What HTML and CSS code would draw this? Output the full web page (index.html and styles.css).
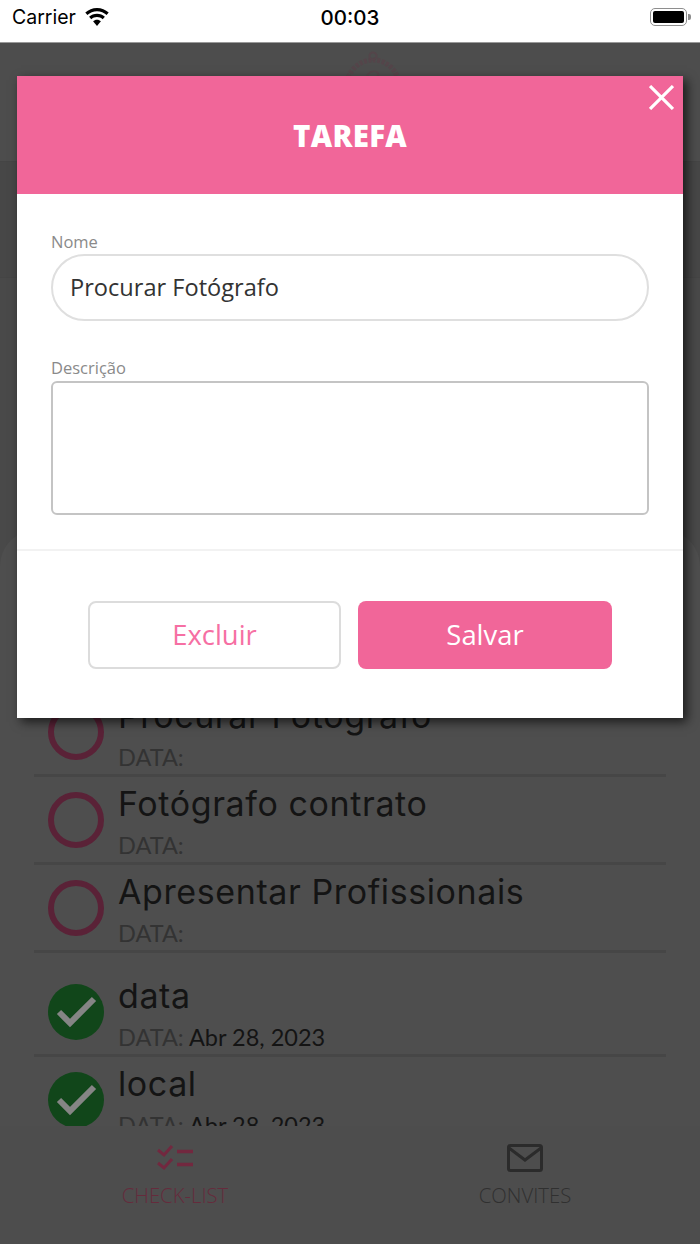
FILE: index.html
```html
<!DOCTYPE html>
<html lang="pt">
<head>
<meta charset="utf-8">
<title>Tarefa</title>
<link rel="stylesheet" href="styles.css">
</head>
<body>
<div class="status">
  <div class="status-left">
    <span class="carrier">Carrier</span>
    <svg class="wifi" viewBox="0 0 26 19"><path d="M13 3.200c3.700 0 7 1.400 9.600 3.800l2.100-2.400C21.600 1.700 17.500 0 13 0S4.400 1.700 1.300 4.600l2.100 2.400C6 4.600 9.300 3.200 13 3.200z"/><path d="M13 9c2.200 0 4.200.8 5.700 2.200l2.200-2.400C18.800 6.900 16 5.800 13 5.800S7.200 6.900 5.100 8.800l2.200 2.400C8.800 9.800 10.800 9 13 9z"/><path d="M13 11.700c-1.500 0-2.900.6-3.900 1.500L13 18l3.900-4.800c-1-.9-2.400-1.500-3.900-1.500z"/></svg>
  </div>
  <span class="clock">00:03</span>
  <div class="battery"><span class="battery-body"><span class="battery-fill"></span></span><span class="battery-tip"></span></div>
</div>

<div class="app">
  <div class="app-header">
    <svg class="crest" viewBox="0 0 60 60"><circle cx="30" cy="36" r="26" fill="none" stroke="#54454a" stroke-width="5" stroke-dasharray="3 1.500"/><circle cx="30" cy="6" r="3.500" fill="none" stroke="#54454a" stroke-width="2"/><path d="M24 26c2-5 9-6 11-3s-3 6-7 5" fill="none" stroke="#54454a" stroke-width="1.500"/></svg>
  </div>
  <div class="app-sub"></div>
  <div class="sheet">
    <div class="list">
      <div class="task">
        <span class="ring"></span>
        <div class="task-text"><div class="task-name">Procurar Fotógrafo</div><div class="task-date"><span class="date-label">DATA:</span></div></div>
      </div>
      <div class="task">
        <span class="ring"></span>
        <div class="task-text"><div class="task-name">Fotógrafo contrato</div><div class="task-date"><span class="date-label">DATA:</span></div></div>
      </div>
      <div class="task task-last">
        <span class="ring"></span>
        <div class="task-text"><div class="task-name">Apresentar Profissionais</div><div class="task-date"><span class="date-label">DATA:</span></div></div>
      </div>
      <div class="task">
        <svg class="done" viewBox="0 0 56 56"><circle cx="28" cy="28" r="28" fill="#11461a"/><path d="M11 28l11 11 24-24" fill="none" stroke="#858585" stroke-width="6"/></svg>
        <div class="task-text"><div class="task-name">data</div><div class="task-date"><span class="date-label">DATA:</span> Abr 28, 2023</div></div>
      </div>
      <div class="task">
        <svg class="done" viewBox="0 0 56 56"><circle cx="28" cy="28" r="28" fill="#11461a"/><path d="M11 28l11 11 24-24" fill="none" stroke="#858585" stroke-width="6"/></svg>
        <div class="task-text"><div class="task-name">local</div><div class="task-date"><span class="date-label">DATA:</span> Abr 28, 2023</div></div>
      </div>
    </div>
  </div>
  <div class="tabs">
    <div class="tab tab-active">
      <svg class="tab-icon" viewBox="0 0 36 28"><path d="M1 6l6 5 8-9M1 19l6 5 8-9" fill="none" stroke="#72283f" stroke-width="3"/><path d="M20 7.500h16M20 20.500h16" fill="none" stroke="#72283f" stroke-width="3.500"/></svg>
      <span>CHECK-LIST</span>
    </div>
    <div class="tab">
      <svg class="tab-icon" viewBox="0 0 36 28"><rect x="1.500" y="1.500" width="33" height="25" rx="2" fill="none" stroke="#2b2b2b" stroke-width="3"/><path d="M2 4l16 12L34 4" fill="none" stroke="#2b2b2b" stroke-width="3"/></svg>
      <span>CONVITES</span>
    </div>
  </div>
</div>

<div class="modal">
  <div class="modal-head">
    <h1>TAREFA</h1>
    <svg class="close" viewBox="0 0 24 24"><path d="M1 1l22 22M23 1L1 23" stroke="#fff" stroke-width="3" fill="none"/></svg>
  </div>
  <div class="modal-body">
    <label class="field-label name-label">Nome</label>
    <div class="name-input">Procurar Fotógrafo</div>
    <label class="field-label desc-label">Descrição</label>
    <div class="desc-input"></div>
  </div>
  <div class="modal-foot">
    <button class="btn btn-outline">Excluir</button>
    <button class="btn btn-fill">Salvar</button>
  </div>
</div>
</body>
</html>
```
FILE: styles.css
```css
* { box-sizing: border-box; }
html, body { margin: 0; padding: 0; }
body {
  width: 700px;
  height: 1244px;
  position: relative;
  overflow: hidden;
  background: #4d4d4d;
  font-family: "Open Sans", sans-serif;
}
.status {
  height: 43px;
  background: #fff;
  display: flex;
  align-items: center;
  justify-content: space-between;
  padding: 0 9px 8px 12px;
  position: relative;
  border-bottom: 1px solid #999;
  color: #000;
  font-family: Inter, "Liberation Sans", sans-serif;
}
.status-left { display: flex; align-items: center; gap: 8px; }
.carrier { font-size: 19.500px; }
.wifi { width: 26px; height: 19px; margin-top: 0; }
.clock {
  font-size: 20.500px;
  font-weight: 500;
  position: absolute;
  left: 0;
  right: 0;
  top: 5px;
  text-align: center;
}
.battery { display: flex; align-items: center; gap: 1px; }
.battery-body {
  width: 37px;
  height: 18px;
  border: 1.500px solid #8e8e8e;
  border-radius: 5px;
  padding: 2px;
  display: block;
}
.battery-fill { display: block; height: 100%; background: #000; border-radius: 2px; }
.battery-tip { width: 3px; height: 6px; background: #8e8e8e; border-radius: 0 2px 2px 0; }

.app { height: 1201px; position: relative; background: #494949; }
.app-header {
  height: 119px;
  background: #4d4d4d;
  border-bottom: 1px solid #454545;
  display: flex;
  justify-content: center;
  padding: 7px 0 0 46px;
}
.crest { width: 60px; height: 60px; }
.app-sub { height: 116px; border-bottom: 1px solid #454545; background: #474747; }
.sheet {
  position: absolute;
  left: 0;
  right: 0;
  top: 487px;
  height: 596px;
  background: #4e4e4e;
  border-radius: 36px 36px 0 0;
  overflow: hidden;
}
.list { padding: 159px 34px 0; }
.task {
  height: 88px;
  display: flex;
  align-items: center;
  gap: 14px;
  padding-left: 14px;
  border-bottom: 3px solid #464646;
}
.task-last { margin-bottom: 16px; }
.ring {
  flex: none;
  width: 56px;
  height: 56px;
  border: 6px solid #5a2237;
  border-radius: 50%;
}
.done { flex: none; width: 56px; height: 56px; }
.task-text { min-width: 0; padding-top: 4px; }
.task-name {
  font-family: Inter, sans-serif;
  font-size: 34px;
  letter-spacing: 0.600px;
  line-height: 40px;
  color: #141414;
}
.task-date {
  font-family: Lato, sans-serif;
  font-size: 23.500px;
  line-height: 30px;
  margin-top: 6px;
  color: #141414;
}
.date-label { color: #333; }
.tabs {
  position: absolute;
  left: 0;
  right: 0;
  top: 1083px;
  height: 118px;
  display: grid;
  grid-template-columns: 350px 350px;
  background: #4d4d4d;
}
.tab {
  display: flex;
  flex-direction: column;
  align-items: center;
  padding-top: 18px;
  font-size: 20.300px;
  font-weight: 300;
  color: #303030;
  gap: 9px;
}
.tab-active { color: #652b3c; }
.tab-icon { width: 36px; height: 28px; }

.modal {
  position: absolute;
  left: 17px;
  top: 76px;
  width: 666px;
  height: 642px;
  background: #fff;
  box-shadow: 4px 4px 10px rgba(0, 0, 0, 0.65);
  display: flex;
  flex-direction: column;
}
.modal-head {
  height: 118px;
  background: #f16699;
  display: flex;
  align-items: center;
  justify-content: center;
  position: relative;
  flex: none;
}
.modal-head h1 {
  margin: 0;
  color: #fff;
  font-size: 29.500px;
  font-weight: 800;
  letter-spacing: 0.300px;
}
.close { position: absolute; right: 9px; top: 9px; width: 25px; height: 25px; }
.modal-body {
  height: 357px;
  flex: none;
  padding: 37px 34px 0;
  border-bottom: 2px solid #f2f2f2;
}
.field-label {
  display: block;
  font-size: 16.500px;
  line-height: 22px;
  color: #8a8a8a;
}
.name-label { margin-bottom: 1px; }
.name-input {
  height: 67px;
  border: 2px solid #dfdfdf;
  border-radius: 34px;
  padding-left: 17px;
  font-size: 23.600px;
  line-height: 63px;
  color: #333;
  margin-bottom: 36px;
}
.desc-label { margin-bottom: 2px; }
.desc-input {
  height: 134px;
  border: 2px solid #c4c4c4;
  border-radius: 6px;
}
.modal-foot {
  flex: 1;
  display: flex;
  gap: 17px;
  padding: 50px 71px 0;
}
.btn {
  height: 68px;
  border-radius: 8px;
  font-family: "Open Sans", sans-serif;
  font-size: 27.400px;
  padding: 0 0 2px;
}
.btn-outline { width: 253px; background: #fff; border: 2px solid #dcdcdc; color: #f66fa3; }
.btn-fill { width: 254px; background: #f16699; border: none; color: #fff; }
```
